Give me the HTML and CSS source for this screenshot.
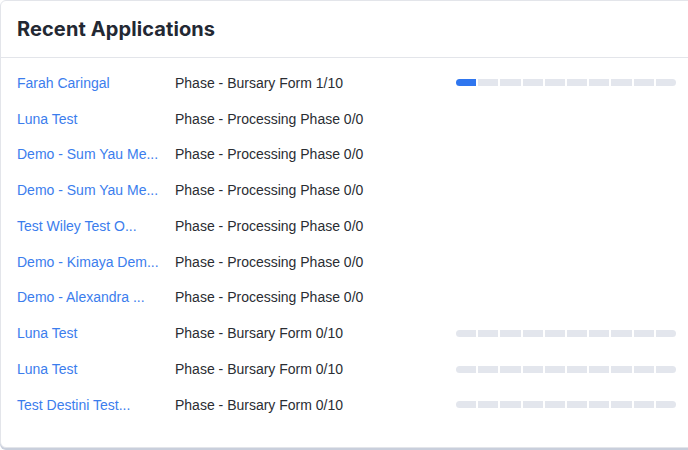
FILE: index.html
```html
<!DOCTYPE html>
<html>
<head>
<meta charset="utf-8">
<link rel="stylesheet" href="styles.css">
</head>
<body>
<div class="card">
  <div class="card-header"><h2 class="title">Recent Applications</h2></div>
  <div class="list">
    <div class="row"><a class="name">Farah Caringal</a><span class="phase">Phase - Bursary Form 1/10</span>
      <div class="progress"><span class="seg on"></span><span class="seg"></span><span class="seg"></span><span class="seg"></span><span class="seg"></span><span class="seg"></span><span class="seg"></span><span class="seg"></span><span class="seg"></span><span class="seg"></span></div></div>
    <div class="row"><a class="name">Luna Test</a><span class="phase">Phase - Processing Phase 0/0</span></div>
    <div class="row"><a class="name">Demo - Sum Yau Me...</a><span class="phase">Phase - Processing Phase 0/0</span></div>
    <div class="row"><a class="name">Demo - Sum Yau Me...</a><span class="phase">Phase - Processing Phase 0/0</span></div>
    <div class="row"><a class="name">Test Wiley Test O...</a><span class="phase">Phase - Processing Phase 0/0</span></div>
    <div class="row"><a class="name">Demo - Kimaya Dem...</a><span class="phase">Phase - Processing Phase 0/0</span></div>
    <div class="row"><a class="name">Demo - Alexandra ...</a><span class="phase">Phase - Processing Phase 0/0</span></div>
    <div class="row"><a class="name">Luna Test</a><span class="phase">Phase - Bursary Form 0/10</span>
      <div class="progress"><span class="seg"></span><span class="seg"></span><span class="seg"></span><span class="seg"></span><span class="seg"></span><span class="seg"></span><span class="seg"></span><span class="seg"></span><span class="seg"></span><span class="seg"></span></div></div>
    <div class="row"><a class="name">Luna Test</a><span class="phase">Phase - Bursary Form 0/10</span>
      <div class="progress"><span class="seg"></span><span class="seg"></span><span class="seg"></span><span class="seg"></span><span class="seg"></span><span class="seg"></span><span class="seg"></span><span class="seg"></span><span class="seg"></span><span class="seg"></span></div></div>
    <div class="row"><a class="name">Test Destini Test...</a><span class="phase">Phase - Bursary Form 0/10</span>
      <div class="progress"><span class="seg"></span><span class="seg"></span><span class="seg"></span><span class="seg"></span><span class="seg"></span><span class="seg"></span><span class="seg"></span><span class="seg"></span><span class="seg"></span><span class="seg"></span></div></div>
  </div>
</div>
</body>
</html>
```
FILE: styles.css
```css
html, body {
  margin: 0;
  padding: 0;
  background: #ffffff;
}
body {
  font-family: "Liberation Sans", Arial, sans-serif;
  width: 688px;
  height: 450px;
  overflow: hidden;
}
.card {
  box-sizing: border-box;
  width: 700px;
  height: 448px;
  border: 1px solid #e3e5ea;
  border-radius: 6px;
  background: #fff;
  box-shadow: 0 2px 0 #c9cfdc;
}
.card-header {
  height: 56px;
  border-bottom: 1px solid #e3e5ea;
  padding-left: 16px;
  display: flex;
  align-items: center;
}
.title {
  margin: 0;
  font-family: Inter, "Noto Sans", sans-serif;
  font-weight: 700;
  font-size: 20px;
  color: #232833;
  letter-spacing: 0.1px;
}
.list {
  padding-top: 7px;
}
.row {
  height: 35.78px;
  display: flex;
  align-items: center;
  padding-left: 16px;
  font-size: 14px;
}
.name {
  width: 158px;
  flex: none;
  color: #3b7ded;
  white-space: nowrap;
}
.phase {
  color: #2a2d33;
  white-space: nowrap;
}
.progress {
  margin-left: auto;
  margin-right: 23px;
  width: 220px;
  height: 7px;
  display: flex;
  gap: 2px;
}
.seg {
  flex: 1;
  background: #e3e6ed;
}
.seg:first-child {
  border-radius: 4px 0 0 4px;
}
.seg:last-child {
  border-radius: 0 4px 4px 0;
}
.seg.on {
  background: #2f76ef;
}
```
